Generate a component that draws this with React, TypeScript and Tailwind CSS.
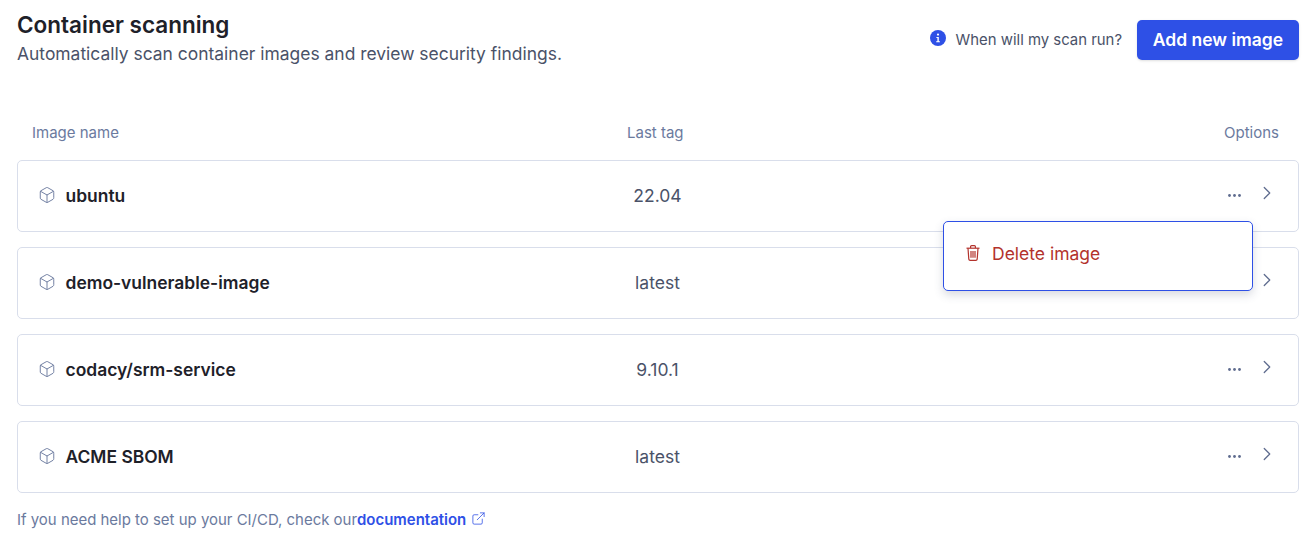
import { Box, ChevronRight, ExternalLink } from 'lucide-react';

const images = [
  { name: 'ubuntu', tag: '22.04', open: true },
  { name: 'demo-vulnerable-image', tag: 'latest', open: false },
  { name: 'codacy/srm-service', tag: '9.10.1', open: false },
  { name: 'ACME SBOM', tag: 'latest', open: false },
];

function TrashIcon() {
  return (
    <svg viewBox="0 0 14 16" className="mt-[-3px] h-[16px] w-[14px] text-[#b3322c]" fill="none" stroke="currentColor" strokeWidth={1.2}>
      <path d="M0.5 3.2h13" />
      <path d="M4.6 3V1.6c0-.6.4-1 1-1h2.8c.6 0 1 .4 1 1V3" />
      <path d="M2 3.2l.8 10.9c.1.8.6 1.3 1.3 1.3h5.8c.7 0 1.2-.5 1.3-1.3L12 3.2" />
      <path d="M5 6v6.8M7 6v6.8M9 6v6.8" />
    </svg>
  );
}

function ImageRow({ name, tag, open }: { name: string; tag: string; open: boolean }) {
  return (
    <div className="relative flex h-[72px] items-center rounded-[5px] border border-[#d9deeb] bg-white pl-[20px] pr-[20px]">
      <div className="flex w-[542px] items-center gap-[10px]">
        <Box className="mt-[-2px] h-[18px] w-[18px] text-[#6b7a9e]" strokeWidth={1.25} />
        <span className="ml-[-0.5px] text-[17.45px] font-semibold text-[#1e2129]">{name}</span>
      </div>
      <div className="w-[155px] text-center text-[17.5px] text-[#4a5268]">{tag}</div>
      <div className="ml-auto flex items-center gap-[15px] text-[#5f6c8f]">
        <svg viewBox="0 0 13 3" className="mt-[-1px] h-[3px] w-[13px]" fill="currentColor">
          <circle cx="1.5" cy="1.5" r="1.4" />
          <circle cx="6.5" cy="1.5" r="1.4" />
          <circle cx="11.5" cy="1.5" r="1.4" />
        </svg>
        <ChevronRight className="mt-[-7px] h-[22px] w-[22px]" strokeWidth={1.4} />
      </div>
      {open && (
        <div className="absolute left-[925px] top-[60px] z-10 flex h-[70px] w-[310px] items-center gap-[12px] rounded-[5px] border border-[#2e50e6] bg-white pb-[4px] pl-[22px] shadow-[0_4px_10px_rgba(60,70,100,0.2)]">
          <TrashIcon />
          <span className="text-[17.5px] text-[#b3322c]">Delete image</span>
        </div>
      )}
    </div>
  );
}

export default function App() {
  return (
    <div className="h-[537px] overflow-hidden bg-white pl-[17px] pr-[14px] font-['Inter',sans-serif]">
      <div className="flex items-start justify-between pt-[10px]">
        <div>
          <h1 className="text-[22.5px] leading-[30px] font-semibold text-[#1e2129]">Container scanning</h1>
          <p className="text-[17.45px] leading-[28px] text-[#4a5268]">Automatically scan container images and review security findings.</p>
        </div>
        <div className="mt-[10px] flex items-center">
          <svg viewBox="0 0 16 16" className="mt-[-4px] h-[16px] w-[16px]">
            <circle cx="8" cy="8" r="8" fill="#2e50e6" />
            <circle cx="8" cy="4.6" r="1.1" fill="#fff" />
            <path d="M6.4 7h2.4v4.2h1.1v1.1H6.2v-1.1h1.2V8.1h-1z" fill="#fff" />
          </svg>
          <span className="ml-[10px] text-[14.9px] text-[#4a5268]">When will my scan run?</span>
          <button className="ml-[15px] h-[40px] w-[162px] rounded-[5px] bg-[#2e50e6] pt-[1px] text-[17.5px] font-semibold text-white shadow-sm">Add new image</button>
        </div>
      </div>

      <div className="mt-[53px] flex h-[24px] items-center text-[15px] text-[#6b7a9e]">
        <span className="ml-[15px] w-[595px]">Image name</span>
        <span>Last tag</span>
        <span className="ml-auto mr-[20px]">Options</span>
      </div>

      <div className="mt-[15px] flex flex-col gap-[15px]">
        {images.map((image) => (
          <ImageRow key={image.name} name={image.name} tag={image.tag} open={image.open} />
        ))}
      </div>

      <div className="mt-[16px] flex items-center text-[14.96px] leading-[22px] text-[#6b7a9e]">
        <span>If you need help to set up your CI/CD, check our</span>
        <a className="font-semibold text-[#2e50e6]">documentation</a>
        <ExternalLink className="ml-[5px] mt-[-3px] h-[15px] w-[15px] text-[#2e50e6]" strokeWidth={1.25} />
      </div>
    </div>
  );
}
